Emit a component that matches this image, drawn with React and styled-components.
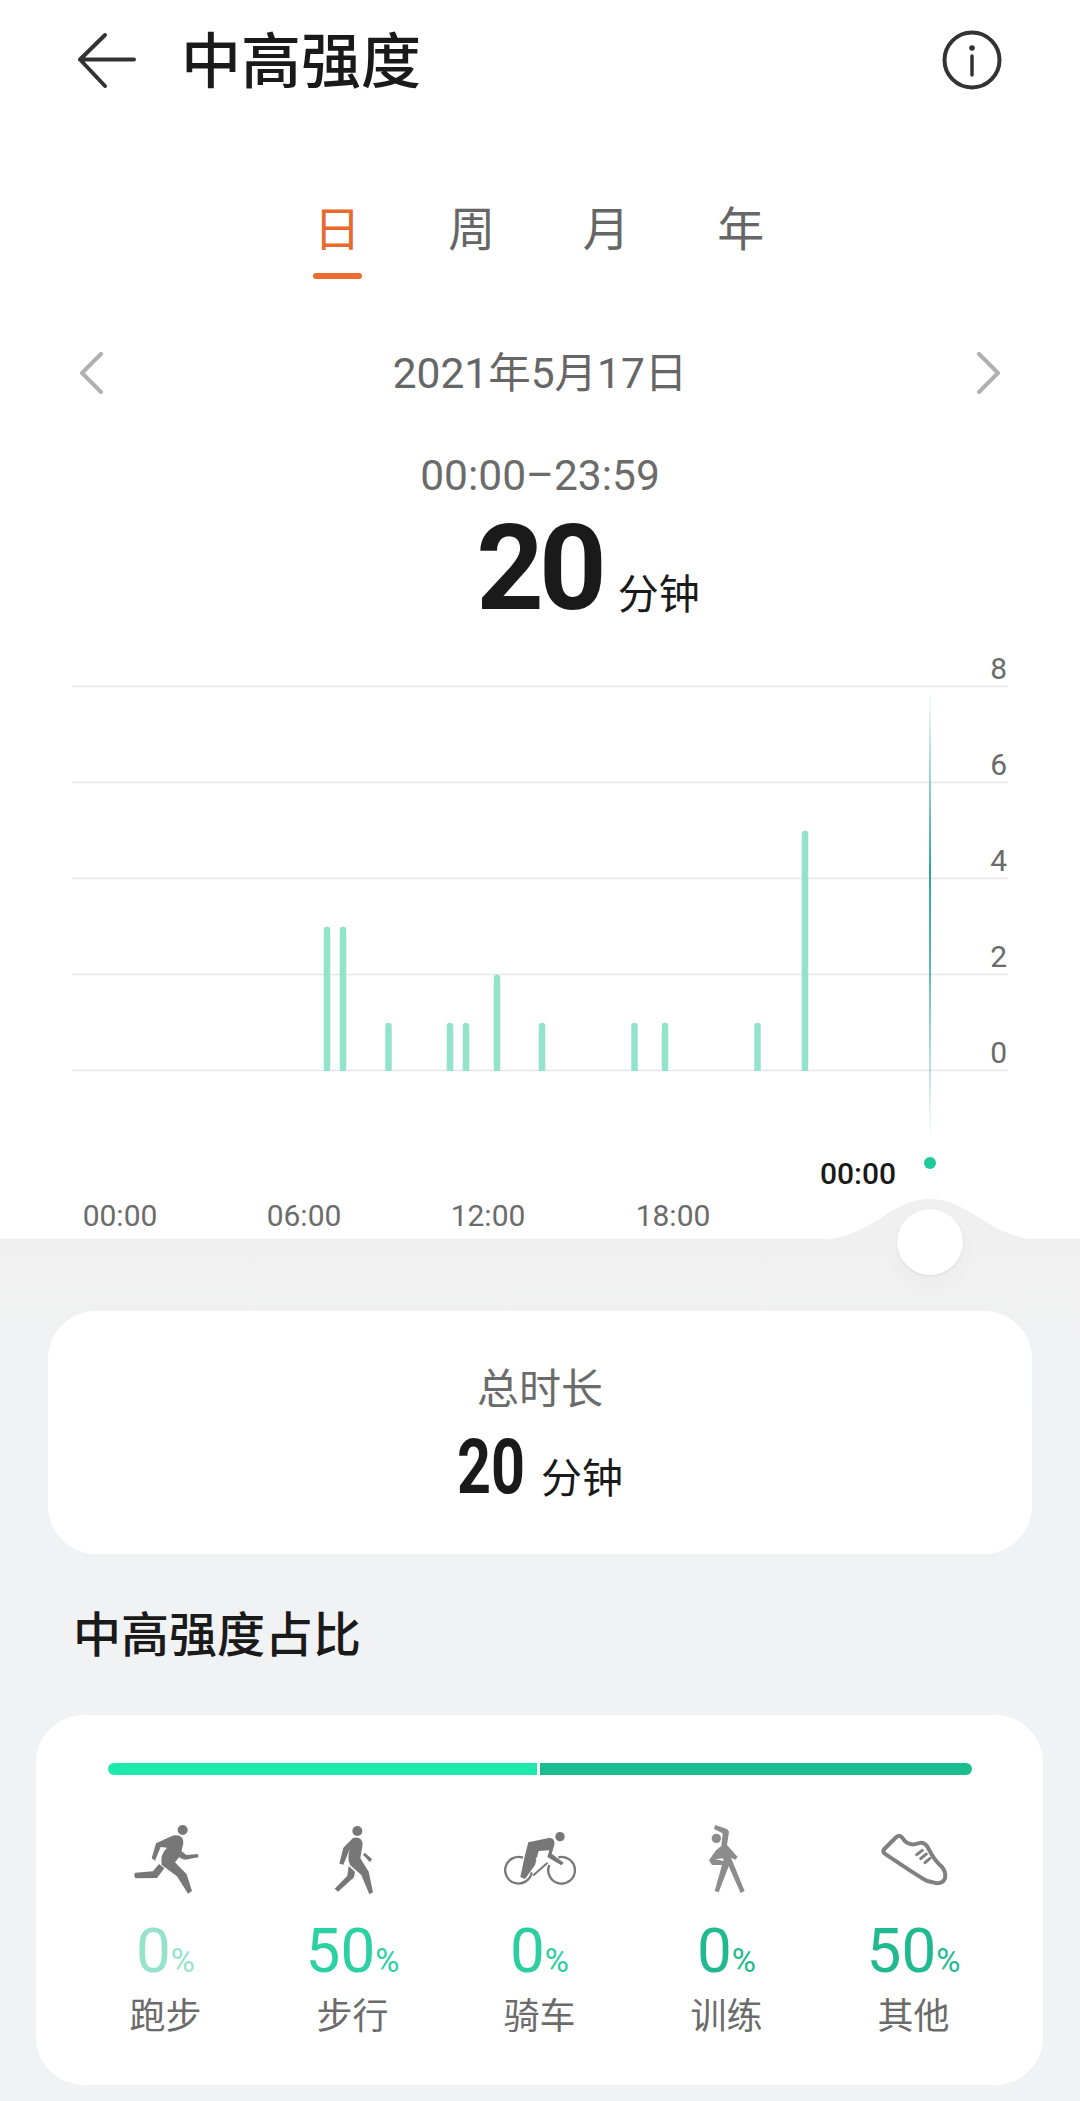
import styled, { createGlobalStyle } from "styled-components"

const FONT = `Roboto, "Noto Sans CJK SC", sans-serif`

const GlobalStyle = createGlobalStyle`
  html, body {
    margin: 0;
    padding: 0;
    background: #f1f2f4;
  }
  body {
    font-family: ${FONT};
  }
`

const bars = [
  { x: 327, v: 3 },
  { x: 343, v: 3 },
  { x: 388.5, v: 1 },
  { x: 450, v: 1 },
  { x: 466, v: 1 },
  { x: 497, v: 2 },
  { x: 542, v: 1 },
  { x: 634.5, v: 1 },
  { x: 665, v: 1 },
  { x: 757.5, v: 1 },
  { x: 805, v: 5 },
]

const yTicks = [8, 6, 4, 2, 0]
const xTicks = [
  { x: 120, label: "00:00" },
  { x: 304, label: "06:00" },
  { x: 488, label: "12:00" },
  { x: 673, label: "18:00" },
]

const BASE_Y = 1071
const UNIT = 48

function barPath(b) {
  const h = b.v * UNIT
  const l = b.x - 3.25
  const r = b.x + 3.25
  return `M${l} ${BASE_Y}V${BASE_Y - h + 3}A3.25 3.25 0 0 1 ${r} ${BASE_Y - h + 3}V${BASE_Y}Z`
}

function RunIcon() {
  return (
    <StatSvg viewBox="0 0 270 270" fill="#777">
      <circle cx="185" cy="45" r="15" />
      <path d="M92 130 L105 85 L158 61 Q188 57 187 85 L178 122 L162 142 L197 178 L213 228 L201 236 L168 184 L122 150 Q116 120 138 98 L119 96 L102 137 Z" />
      <path d="M181 108 L196 120 L231 117 L232 127 L192 134 L175 128 Z" />
      <path d="M114 147 L130 160 L108 189 L44 190 Q36 181 43 173 L96 169 Z" />
    </StatSvg>
  )
}

function WalkIcon() {
  return (
    <StatSvg viewBox="0 0 270 270" fill="#777">
      <circle cx="148" cy="48" r="15" />
      <path d="M94 146 L106 98 L135 69 Q160 62 164 86 L157 130 L182 170 L195 232 L184 238 L160 180 L126 150 Q116 126 127 98 L106 149 Z" />
      <path d="M165 119 L170 113 L192 132 L186 142 Z" />
      <path d="M122 153 L141 170 L138 187 L90 230 L80 221 L118 182 Z" />
    </StatSvg>
  )
}

function BikeIcon() {
  return (
    <StatSvg viewBox="0 0 270 270" fill="#777">
      <circle cx="195" cy="65" r="14" />
      <path d="M100 82 L165 68 Q181 70 178 90 L170 116 L206 143 L199 151 L157 126 L163 106 L131 108 L120 150 L90 192 L76 186 L90 120 Z" />
      <path d="M122 130 L148 118 L132 148 Z" fill="#fff" />
      <path d="M116 180 L156 145" stroke="#777" strokeWidth="6" strokeLinecap="round" fill="none" />
      <path d="M84 128 A40 40 0 1 0 110 172" stroke="#777" strokeWidth="7" fill="none" />
      <path d="M190 127 A40 40 0 1 1 163 150" stroke="#777" strokeWidth="7" fill="none" />
    </StatSvg>
  )
}

function StretchIcon() {
  return (
    <StatSvg viewBox="0 0 270 270" fill="#8c8c8c">
      <circle cx="103" cy="70" r="14" />
      <path d="M99 30 L135 42 L141 50 L135 90 L167 126 L160 134 L147 128 L188 228 L176 234 L140 154 L110 232 L98 228 L120 150 L90 150 L81 136 L102 106 L118 93 L122 55 L96 42 Z" />
      <path d="M100 133 L122 130 L126 138 Z" fill="#fff" />
    </StatSvg>
  )
}

function ShoeIcon() {
  return (
    <StatSvg viewBox="0 0 270 270" fill="none" stroke="#808080" strokeWidth="12" strokeLinecap="round" strokeLinejoin="round">
      <path d="M46 102 L82 66 Q92 58 100 68 Q112 90 135 88 L158 83 Q170 84 178 100 Q195 135 218 155 Q232 170 228 190 Q222 205 205 205 L175 198 Q160 192 46 115 Q40 108 46 102 Z" />
      <path d="M143 119 L160 106" strokeWidth="9" />
      <path d="M155 131 L172 117" strokeWidth="9" />
      <path d="M168 143 L183 130" strokeWidth="9" />
    </StatSvg>
  )
}

const stats = [
  { name: "跑步", value: 0, color: "#96e3cb", Icon: RunIcon },
  { name: "步行", value: 50, color: "#2bd0a3", Icon: WalkIcon },
  { name: "骑车", value: 0, color: "#2bcda1", Icon: BikeIcon },
  { name: "训练", value: 0, color: "#21b990", Icon: StretchIcon },
  { name: "其他", value: 50, color: "#21b990", Icon: ShoeIcon },
]

export default function App() {
  return (
    <Page>
      <GlobalStyle />
      <Top>
        <Header>
          <HeaderIcon viewBox="0 0 64 60" $w={64}>
            <path d="M59 29.5H5M5 29.5L30 5M5 29.5L30 56" fill="none" stroke="#333" strokeWidth="4" strokeLinecap="round" strokeLinejoin="round" />
          </HeaderIcon>
          <Title>中高强度</Title>
          <HeaderIcon viewBox="0 0 60 60" $w={60}>
            <circle cx="30" cy="30" r="27.5" fill="none" stroke="#333" strokeWidth="4" />
            <circle cx="30" cy="18" r="2.8" fill="#333" />
            <path d="M30 26V45" stroke="#333" strokeWidth="3.5" strokeLinecap="round" />
          </HeaderIcon>
        </Header>

        <Tabs>
          <Tab $active>日<TabMark $active /></Tab>
          <Tab>周<TabMark /></Tab>
          <Tab>月<TabMark /></Tab>
          <Tab>年<TabMark /></Tab>
        </Tabs>

        <DateRow>
          <Chevron viewBox="0 0 24 42">
            <path d="M22 2L3 21L22 40" />
          </Chevron>
          <DateText>2021年5月17日</DateText>
          <Chevron viewBox="0 0 24 42">
            <path d="M2 2L21 21L2 40" />
          </Chevron>
        </DateRow>

        <TimeRange>00:00–23:59</TimeRange>
        <BigRow>
          <BigNumber>20</BigNumber>
          <Unit>分钟</Unit>
        </BigRow>

        <ChartWrap>
          <ChartSvg viewBox="0 640 1080 600">
            <defs>
              <linearGradient id="cursor" x1="0" y1="0" x2="0" y2="1">
                <stop offset="0" stopColor="#2aa895" stopOpacity="0" />
                <stop offset="0.4" stopColor="#2aa895" stopOpacity="1" />
                <stop offset="0.6" stopColor="#2aa895" stopOpacity="0.8" />
                <stop offset="1" stopColor="#2aa895" stopOpacity="0" />
              </linearGradient>
            </defs>
            {[0, 1, 2, 3, 4].map((i) => (
              <GridLine key={i} x1="72" x2="1008" y1={686.5 + i * 96} y2={686.5 + i * 96} />
            ))}
            {bars.map((b) => (
              <path key={b.x} d={barPath(b)} fill="#93e3cb" />
            ))}
            <rect x="929" y="690" width="2" height="450" fill="url(#cursor)" />
            <circle cx="930" cy="1163" r="6" fill="#1fc99b" />
            {yTicks.map((t, i) => (
              <AxisText key={t} x="1007" y={679 + i * 96} textAnchor="end">{t}</AxisText>
            ))}
            {xTicks.map((t) => (
              <AxisText key={t.label} x={t.x} y="1226" textAnchor="middle">{t.label}</AxisText>
            ))}
            <CursorText x="858" y="1184" textAnchor="middle">00:00</CursorText>
            <path d="M815 1240C872 1240 888 1199 930 1199C972 1199 988 1240 1045 1240Z" fill="#f0f0f0" />
          </ChartSvg>
          <Knob />
        </ChartWrap>
      </Top>

      <Lower>
        <TotalCard>
          <TotalLabel>总时长</TotalLabel>
          <TotalRow>
            <TotalNumber>20</TotalNumber>
            <Unit>分钟</Unit>
          </TotalRow>
        </TotalCard>

        <SectionTitle>中高强度占比</SectionTitle>

        <ShareCard>
          <ShareBar>
            <ShareSegment $color="#1de9ad" $left />
            <ShareSegment $color="#1abd90" />
          </ShareBar>
          <StatGrid>
            {stats.map((s) => (
              <Stat key={s.name}>
                <s.Icon />
                <StatValue $color={s.color}>
                  {s.value}<Percent>%</Percent>
                </StatValue>
                <StatName>{s.name}</StatName>
              </Stat>
            ))}
          </StatGrid>
        </ShareCard>
      </Lower>
    </Page>
  )
}

const Page = styled.div`
  width: 1080px;
  height: 2101px;
  overflow: hidden;
  display: flex;
  flex-direction: column;
  background: #f1f2f4;
`

const Top = styled.div`
  background: #fff;
  display: flex;
  flex-direction: column;
`

const Header = styled.div`
  height: 120px;
  display: flex;
  align-items: center;
  padding: 0 78px 0 75px;
`

const HeaderIcon = styled.svg`
  width: ${(p) => p.$w}px;
  height: 60px;
  flex: none;
`

const Title = styled.h1`
  flex: 1;
  margin: 5px 0 0 42px;
  font-size: 60px;
  line-height: 80px;
  font-weight: 500;
  color: #1a1a1a;
`

const Tabs = styled.div`
  margin-top: 68px;
  padding-right: 2px;
  display: flex;
  justify-content: center;
`

const Tab = styled.div`
  width: 134.5px;
  display: flex;
  flex-direction: column;
  align-items: center;
  font-size: 47px;
  line-height: 84px;
  color: ${(p) => (p.$active ? "#e8692d" : "#666")};
`

const TabMark = styled.div`
  width: 49px;
  height: 6px;
  margin-top: 1px;
  border-radius: 3px;
  background: ${(p) => (p.$active ? "#ee6c2e" : "transparent")};
`

const DateRow = styled.div`
  margin-top: 65px;
  height: 60px;
  padding: 0 79px;
  display: flex;
  align-items: center;
  justify-content: space-between;
`

const Chevron = styled.svg`
  width: 24px;
  height: 42px;
  margin-bottom: 2px;
  fill: none;
  stroke: #b0b0b0;
  stroke-width: 4;
  stroke-linecap: round;
  stroke-linejoin: round;
`

const DateText = styled.div`
  font-size: 42.5px;
  line-height: 60px;
  color: #666;
`

const TimeRange = styled.div`
  margin-top: 47px;
  text-align: center;
  font-size: 42.5px;
  line-height: 50px;
  color: #6b6b6b;
`

const BigRow = styled.div`
  margin-top: 8px;
  height: 120px;
  display: flex;
  justify-content: center;
  align-items: baseline;
  gap: 16px;
  padding-left: 96px;
`

const BigNumber = styled.span`
  font-size: 118px;
  line-height: 120px;
  font-weight: 700;
  letter-spacing: -5px;
  color: #1a1a1a;
`

const Unit = styled.span`
  font-size: 41px;
  color: #1a1a1a;
`

const ChartWrap = styled.div`
  position: relative;
  margin-top: 11px;
  height: 599px;
`

const ChartSvg = styled.svg`
  display: block;
  width: 1080px;
  height: 600px;
`

const GridLine = styled.line`
  stroke: #e6e6e6;
  stroke-width: 1.5;
`

const AxisText = styled.text`
  font-family: ${FONT};
  font-size: 30px;
  fill: #6b6b6b;
`

const CursorText = styled.text`
  font-family: ${FONT};
  font-size: 30px;
  font-weight: 500;
  fill: #1a1a1a;
`

const Knob = styled.div`
  position: absolute;
  left: 897px;
  top: 569px;
  width: 66px;
  height: 66px;
  border-radius: 50%;
  background: #fff;
  box-shadow: 0 1px 3px rgba(0, 0, 0, 0.08), 0 10px 24px rgba(0, 0, 0, 0.02);
`

const Lower = styled.div`
  flex: 1;
  padding-top: 72px;
  background: linear-gradient(#f0f0f0, #f1f2f4 200px);
  display: flex;
  flex-direction: column;
`

const TotalCard = styled.div`
  margin: 0 48px;
  height: 243px;
  border-radius: 48px;
  background: #fff;
  display: flex;
  flex-direction: column;
  align-items: center;
`

const TotalLabel = styled.div`
  margin-top: 54px;
  font-size: 42px;
  line-height: 50px;
  color: #6b6b6b;
`

const TotalRow = styled.div`
  margin-top: 10px;
  display: flex;
  align-items: baseline;
  gap: 16px;
`

const TotalNumber = styled.span`
  display: inline-block;
  width: 68px;
  font-size: 76px;
  line-height: 84px;
  font-weight: 700;
  white-space: nowrap;
  transform: scaleX(0.78);
  transform-origin: left center;
  color: #1a1a1a;
`

const SectionTitle = styled.h2`
  margin: 52px 0 0 73px;
  height: 109px;
  font-size: 48px;
  line-height: 60px;
  font-weight: 500;
  color: #1a1a1a;
`

const ShareCard = styled.div`
  margin: 0 37px 0 36px;
  height: 370px;
  border-radius: 48px;
  background: #fff;
  padding: 48px 35px 0 36px;
  box-sizing: border-box;
`

const ShareBar = styled.div`
  margin: 0 36px;
  height: 12px;
  display: flex;
  gap: 3px;
`

const ShareSegment = styled.div`
  flex: ${(p) => (p.$left ? "0 0 429px" : "1")};
  background: ${(p) => p.$color};
  border-radius: ${(p) => (p.$left ? "6px 0 0 6px" : "0 6px 6px 0")};
`

const StatGrid = styled.div`
  margin-top: 40px;
  display: grid;
  grid-template-columns: repeat(5, 187px);
`

const Stat = styled.div`
  display: flex;
  flex-direction: column;
  align-items: center;
`

const StatSvg = styled.svg`
  width: 90px;
  height: 90px;
  display: block;
`

const StatValue = styled.div`
  margin-top: 11px;
  font-size: 62px;
  line-height: 70px;
  color: ${(p) => p.$color};
`

const Percent = styled.span`
  font-size: 33px;
`

const StatName = styled.div`
  margin-top: -1px;
  font-size: 36px;
  line-height: 44px;
  color: #6b6b6b;
`
